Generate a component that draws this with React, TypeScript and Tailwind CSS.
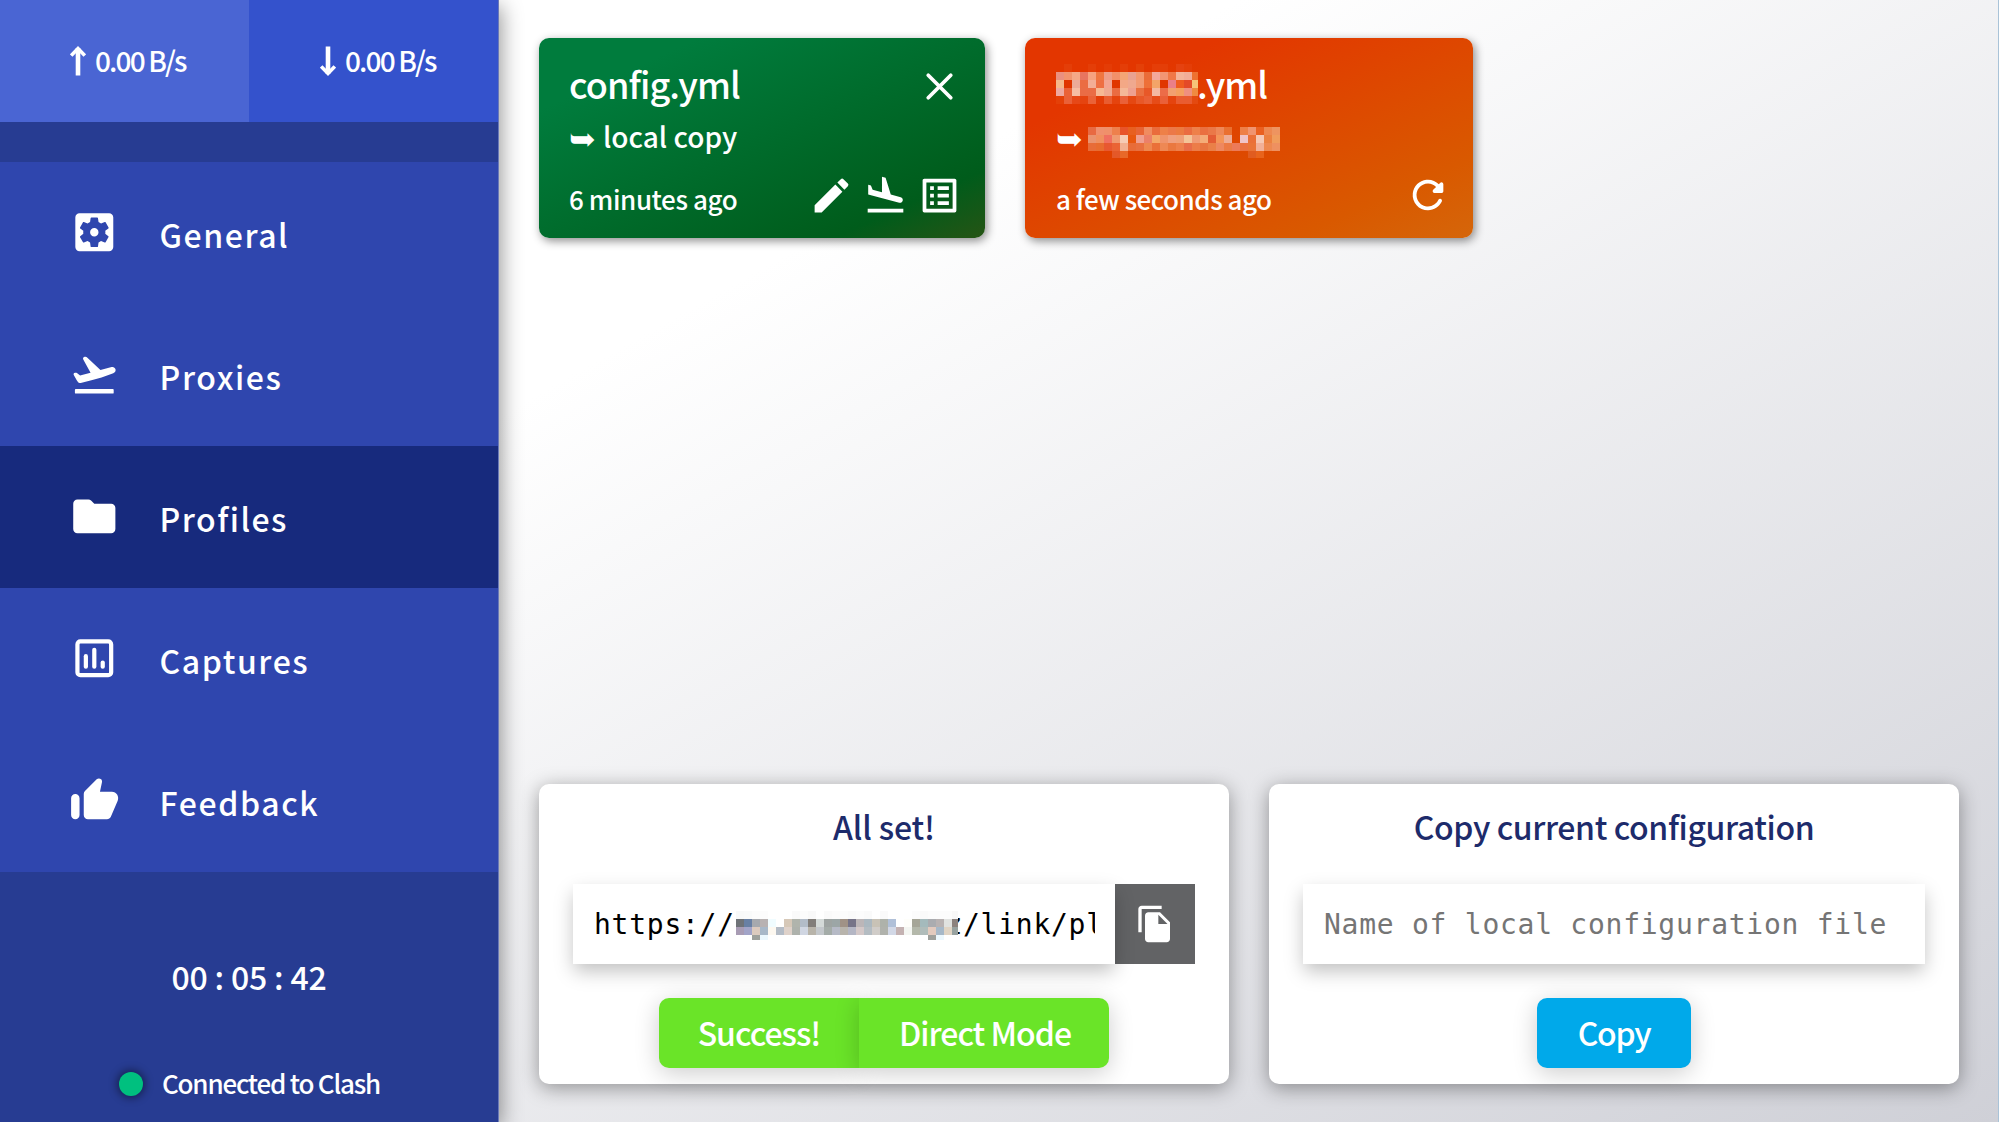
import type { ReactNode } from "react";
import {
  MdEdit,
  MdFileCopy,
  MdFlightLand,
  MdListAlt,
  MdSettingsApplications,
} from "react-icons/md";

type IconProps = { className?: string };

function Icon({ className, children }: IconProps & { children: ReactNode }) {
  return (
    <svg viewBox="0 0 24 24" fill="currentColor" className={className}>
      {children}
    </svg>
  );
}

function TakeoffIcon({ className }: IconProps) {
  return (
    <Icon className={className}>
      <rect x="2.8" y="19" width="18.4" height="2.1" rx="0.4" />
      <path d="M22.07 9.64c-.21-.8-1.04-1.28-1.84-1.06L14.92 10l-6.2-5.8c-.35-.5-.8-.65-1.35-.5-.6.15-.9.75-.6 1.3l3.46 6.25-4.97 1.33-1.5-1.2c-.3-.2-.6-.2-.9-.1-.6.15-.8.6-.6 1l1.4 2.5.6.9c.3.5.7.6 1.3.4l5.53-1.43 4.35-1.16L21 11.49c.81-.23 1.28-1.05 1.07-1.85z" />
    </Icon>
  );
}

function FolderIcon({ className }: IconProps) {
  return (
    <Icon className={className}>
      <path d="M10.59 4.59C10.21 4.21 9.7 4 9.17 4H4c-1.1 0-1.99.9-1.99 2L2 18c0 1.1.9 2 2 2h16c1.1 0 2-.9 2-2V8c0-1.1-.9-2-2-2h-8l-1.41-1.41z" />
    </Icon>
  );
}

function ChartIcon({ className }: IconProps) {
  return (
    <Icon className={className}>
      <rect x="4" y="4" width="16" height="16" rx="1.4" fill="none" stroke="currentColor" strokeWidth="2" />
      <rect x="7" y="10" width="2" height="7" rx="1" />
      <rect x="11" y="7" width="2" height="10" rx="1" />
      <rect x="15" y="13" width="2" height="4" rx="1" />
    </Icon>
  );
}

function ThumbIcon({ className }: IconProps) {
  return (
    <Icon className={className}>
      <path d="M13.12 2.06L7.58 7.6c-.37.37-.58.88-.58 1.41V19c0 1.1.9 2 2 2h9c.8 0 1.52-.48 1.84-1.21l3.26-7.61C23.94 10.2 22.49 8 20.34 8h-5.65l.95-4.58c.1-.5-.05-1.01-.41-1.37-.59-.58-1.53-.58-2.11.01zM3 21c1.1 0 2-.9 2-2v-8c0-1.1-.9-2-2-2s-2 .9-2 2v8c0 1.1.9 2 2 2z" />
    </Icon>
  );
}

function CloseIcon({ className }: IconProps) {
  return (
    <Icon className={className}>
      <path d="M6 6L18 18M18 6L6 18" stroke="currentColor" strokeWidth="2" strokeLinecap="round" />
    </Icon>
  );
}

function RefreshIcon({ className }: IconProps) {
  return (
    <Icon className={className}>
      <path d="M17.65 6.35c-1.63-1.63-3.94-2.57-6.48-2.31-3.67.37-6.69 3.35-7.1 7.02C3.52 15.91 7.27 20 12 20c3.19 0 5.93-1.87 7.21-4.56.32-.67-.16-1.44-.9-1.44-.37 0-.72.2-.88.53-1.13 2.43-3.84 3.97-6.8 3.31-2.22-.49-4.01-2.3-4.48-4.52C5.31 9.44 8.26 6 12 6c1.66 0 3.14.69 4.22 1.78l-1.51 1.51c-.63.63-.19 1.71.7 1.71H19c.55 0 1-.45 1-1V6.41c0-.89-1.08-1.34-1.71-.71l-.64.65z" />
    </Icon>
  );
}

function ArrowIcon({ className }: IconProps) {
  return (
    <svg viewBox="0 0 16 30" fill="none" stroke="currentColor" className={className}>
      <path d="M8 29.5V2" strokeWidth="4.6" />
      <path d="M1.2 9.6L8 2.6l6.8 7" strokeWidth="3.6" />
    </svg>
  );
}

/* Censored text: rows of 8px squares, "-" is an empty square. */
function Mosaic({ rows, className }: { rows: string[]; className: string }) {
  return (
    <div className={"shrink-0 overflow-hidden " + className}>
      {rows.map((row, y) => (
        <div key={y} className="flex">
          {row.split(" ").map((c, x) => (
            <i
              key={x}
              className="block h-2 w-2 shrink-0"
              style={{ backgroundColor: c === "-" ? undefined : "#" + c }}
            />
          ))}
        </div>
      ))}
    </div>
  );
}

const nameMosaic = [
  "- e43e08 - - e43e08 - e43c06 - e43e08 - e44008 - e53e08 e43e08 - e54210 e43e08 -",
  "ea907f f2946e f5a887 e87560 f6a380 f07740 ef9e88 f2916a f4a675 e9a291 f39970 ea6c38 f4a89b f29574 f07848 f4b49a f2ad98 ee7230",
  "f5b98a e03600 ecaa98 eb6c42 f3ad96 ee6f44 f3a492 e03600 f3a886 efa88f f29b74 ee7038 f3a468 e03600 ea7f88 ef5c20 e44a28 f6c378",
  "efa9a0 ea6238 f6bda4 ea6c45 ea6c45 f6b894 f0a890 ea6c42 f4b898 eea090 ea7040 e85828 f4b8a0 ec6c48 f2a070 f4a060 ef9080 f08a40",
  "e44008 ea6038 e64818 e54410 ea6238 e33c08 e95c30 e5440e ea6038 e54812 e85828 ea6035 e64c18 ea6038 e5440e e95c30 e95c30 e44a10",
];

const hostMosaic = [
  "e86a42 f0906e f0906a ee804c e8542a e86020 e86434 f08c60 ea6c3c ee8048 ec7848 ec7a40 ea6c40 ee804a ea7040 ea7848 ee8858 ea7030 - ee8048 f09470 ea6020 ee8850 ee9460",
  "ea9470 f09060 f07060 f09a70 f6ccb4 e85810 f0a090 ec8068 f4a868 f0946c f0a080 f0a078 f4c498 f09a74 f4ac78 e45c34 f49458 eeac94 - f0c4c8 ea7038 f6c8b4 ec8040 f09c5c",
  "e86c38 e86c30 e85830 ea6434 f2b090 e86c38 e87040 ee8850 ea7038 ee8854 ea7840 ee804c e86c48 ec7c48 e87440 ea8048 ee8860 ec7a44 ec7a58 ea7040 ea7438 f2b098 ee8850 ee9060",
  "- - - e45828 e86828 - - - - - - - - - - - - - - - e05c20 e8641c - -",
];

const urlMosaic = [
  "f8f9f9 f9fafa fcfcfc fcfcfc - - - fafafa fcfcfc f9f9f9 - fafafa fcfcfc fcfcfc fafafa fcfcfc fafafa - fafafa - - - fcfcfc fafafa fcfcfc fcfcfc fcfcfc f8f8f8",
  "6f7378 6880a4 a6a9ae b8b2b2 f0fcff - d6c8b8 b0b4ac b2bcc8 827e7a d4dad8 9ea4a2 9ca6a6 a09286 767488 bcb6b8 acb8c0 c8c2b6 aeb2aa b0c0d8 - fefefa a6a698 a4babc aaacb0 b8b2b2 e0e2e0 8c827e",
  "a89cb4 a2a4c8 dccabe a8b8c8 fdf8f0 b4bcc6 dfd2ca aeb2ac d0d6e2 b8b4aa c4c8cc a4aca8 b6bac6 b8b4ac b4b6c4 d4c8c8 b4bcc2 d0ccc8 b0b2ac d2d8e6 c4b2b2 f4f6f2 b4b8aa b0bcba e2cabe a6b8c8 e0d4c4 98a2a0",
  "- - 9ea09c ecf8fe - - - - - - - - - - - - - - - - - - - - 9ea09c ecf8fe - -",
];

const navItems = [
  { label: "General", Icon: MdSettingsApplications, spacing: "tracking-[1.55px]" },
  { label: "Proxies", Icon: TakeoffIcon, spacing: "tracking-[1.55px]" },
  { label: "Profiles", Icon: FolderIcon, spacing: "tracking-[1.5px]", active: true },
  { label: "Captures", Icon: ChartIcon, spacing: "tracking-[1.55px]" },
  { label: "Feedback", Icon: ThumbIcon, spacing: "tracking-[1.6px]" },
];

function Sidebar() {
  return (
    <aside className="relative z-10 flex w-[499px] shrink-0 flex-col border-r border-[#6a79b8] bg-[#273c92] text-white shadow-[2px_6px_20px_rgba(0,0,0,0.42)]">
      <div className="flex h-[122px] text-[28px] tracking-[-1.87px]">
        <div className="flex w-[249px] items-center bg-[#4a65d3] pb-[3px] pl-[70px]">
          <ArrowIcon className="mt-[3px] h-[30px] w-4" />
          <span className="ml-[9px]">0.00 B/s</span>
        </div>
        <div className="flex flex-1 items-center bg-[#3452cc] pb-[3px] pl-[71px]">
          <ArrowIcon className="mt-[3px] h-[30px] w-4 rotate-180" />
          <span className="ml-[9px]">0.00 B/s</span>
        </div>
      </div>
      <nav className="mt-10 text-[32px]">
        {navItems.map(({ label, Icon: NavIcon, spacing, active }) => (
          <div
            key={label}
            className={"flex h-[142px] items-center pl-[69px] " + (active ? "bg-[#172a7d]" : "bg-[#2f46ae]")}
          >
            <NavIcon className="-mt-px h-[50.6px] w-[50.6px]" />
            <span className={"ml-10 pt-0.5 " + spacing}>{label}</span>
          </div>
        ))}
      </nav>
      <div className="flex flex-col items-center pt-[82px]">
        <div className="text-[32px] leading-[44px] tracking-[-0.19px]">00 : 05 : 42</div>
        <div className="mt-[67px] flex h-[38px] items-center self-start pl-[119px]">
          <span className="h-6 w-6 rounded-full bg-[#00c07f] shadow-[0_0_8px_2px_rgba(0,0,0,0.45)]" />
          <span className="ml-[19px] pb-[3px] text-[26px] tracking-[-1.21px]">Connected to Clash</span>
        </div>
      </div>
    </aside>
  );
}

function ProfileCard({
  className,
  title,
  source,
  time,
  corner,
  actions,
}: {
  className: string;
  title: ReactNode;
  source: ReactNode;
  time: ReactNode;
  corner?: ReactNode;
  actions: ReactNode;
}) {
  return (
    <article
      className={
        "flex h-[200px] flex-col rounded-[10px] pt-[21px] text-white shadow-[2px_3px_10px_rgba(0,0,0,0.45)] " +
        className
      }
    >
      <div className="flex h-12 items-center justify-between">
        <div className="flex items-center text-[36px]">{title}</div>
        {corner}
      </div>
      <div className="mt-[11px] flex h-9 items-center text-[28px]">
        <span className="w-[34px] text-[32px]">➥</span>
        {source}
      </div>
      <div className="mt-[18px] flex h-[46px] items-center justify-between">
        <div className="pt-2 text-[26px] leading-9">{time}</div>
        <div className="flex gap-[9px]">{actions}</div>
      </div>
    </article>
  );
}

function Panel({ title, children }: { title: ReactNode; children: ReactNode }) {
  return (
    <section className="flex h-[300px] flex-1 flex-col rounded-[10px] bg-white px-[34px] pt-[18px] shadow-[0_4px_20px_rgba(0,0,0,0.38)]">
      <h2 className="mb-[34px] h-12 text-center text-[32px] leading-[48px] text-[#1d2b6b]">{title}</h2>
      {children}
    </section>
  );
}

const field =
  "relative z-10 flex h-20 flex-1 items-center bg-white pt-px pr-5 pl-[21px] font-['DejaVu_Sans_Mono',monospace] text-[28px] font-normal tracking-[0.74px] shadow-[0_8px_18px_-1px_rgba(0,0,0,0.25)]";

export default function App() {
  return (
    <div className="flex h-[1122px] w-[1999px] overflow-hidden border-r border-[#a9c3d8] bg-[linear-gradient(to_bottom_right,#ffffff_31%,#cfd0d7_100%)] font-['Noto_Sans_CJK_SC',sans-serif] font-medium whitespace-nowrap">
      <Sidebar />
      <main className="flex w-[1500px] shrink-0 flex-col justify-between px-10 py-[38px]">
        <div className="flex gap-10">
          <ProfileCard
            className="w-[446px] bg-[linear-gradient(to_bottom_right,#007c3d_18%,#005c1b_83%,#265414_100%)] pr-[23px] pl-[30px]"
            title={<span className="tracking-[-0.93px]">config.yml</span>}
            source="local copy"
            time={<span className="tracking-[-0.4px]">6 minutes ago</span>}
            corner={<CloseIcon className="mt-[7px] h-[45px] w-[45px]" />}
            actions={
              <>
                <MdEdit className="h-[45px] w-[45px]" />
                <MdFlightLand className="h-[45px] w-[45px]" />
                <MdListAlt className="h-[45px] w-[45px]" />
              </>
            }
          />
          <ProfileCard
            className="w-[448px] bg-[linear-gradient(to_bottom_right,#e33600_22%,#d95900_80%,#d5660a_100%)] pr-[22px] pl-[31px]"
            title={
              <>
                <Mosaic rows={nameMosaic} className="mt-0.5 h-10 w-[142px]" />
                <span className="-ml-px tracking-[-1.1px]">.yml</span>
              </>
            }
            source={<Mosaic rows={hostMosaic} className="mt-3 -ml-0.5 h-[31px] w-48" />}
            time={<span className="tracking-[-0.5px]">a few seconds ago</span>}
            actions={<RefreshIcon className="h-[46px] w-[46px]" />}
          />
        </div>
        <div className="flex gap-10">
          <Panel title={<span className="tracking-[-0.14px]">All set!</span>}>
            <div className="flex">
              <div className={field + " text-black"}>
                <div className="flex w-[501px] items-center overflow-hidden">
                  <span className="w-[142px] shrink-0">https://</span>
                  <Mosaic rows={urlMosaic} className="mt-0.5 h-[29px] w-[222px]" />
                  <span className="flex w-[5px] shrink-0 justify-end overflow-hidden">z</span>
                  <span>/link/pl</span>
                </div>
              </div>
              <button className="flex h-20 w-20 items-center justify-center bg-[#626365] text-white">
                <MdFileCopy className="h-10 w-10" />
              </button>
            </div>
            <div className="mt-[34px] flex justify-center pr-px text-[32px] tracking-[-0.98px] text-white">
              <div className="flex h-[70px] w-[200px] items-center justify-center rounded-l-[10px] bg-[#6ae428] pb-[3px] pl-px shadow-[0_5px_24px_rgba(0,0,0,0.2)]">
                Success!
              </div>
              <div className="flex h-[70px] w-[250px] items-center justify-center rounded-r-[10px] bg-[#6ae428] pb-[3px] pl-[3px] shadow-[0_5px_24px_rgba(0,0,0,0.2)]">
                Direct Mode
              </div>
            </div>
          </Panel>
          <Panel title={<span className="tracking-[-0.39px]">Copy current configuration</span>}>
            <div className="flex">
              <div className={field + " text-[#757575]"}>Name of local configuration file</div>
            </div>
            <button className="mt-[34px] flex h-[70px] w-[154px] items-center justify-center self-center rounded-[10px] bg-[#00a9ea] pb-[3px] text-[32px] tracking-[-1.27px] text-white shadow-[0_5px_24px_rgba(0,0,0,0.2)]">
              Copy
            </button>
          </Panel>
        </div>
      </main>
    </div>
  );
}
